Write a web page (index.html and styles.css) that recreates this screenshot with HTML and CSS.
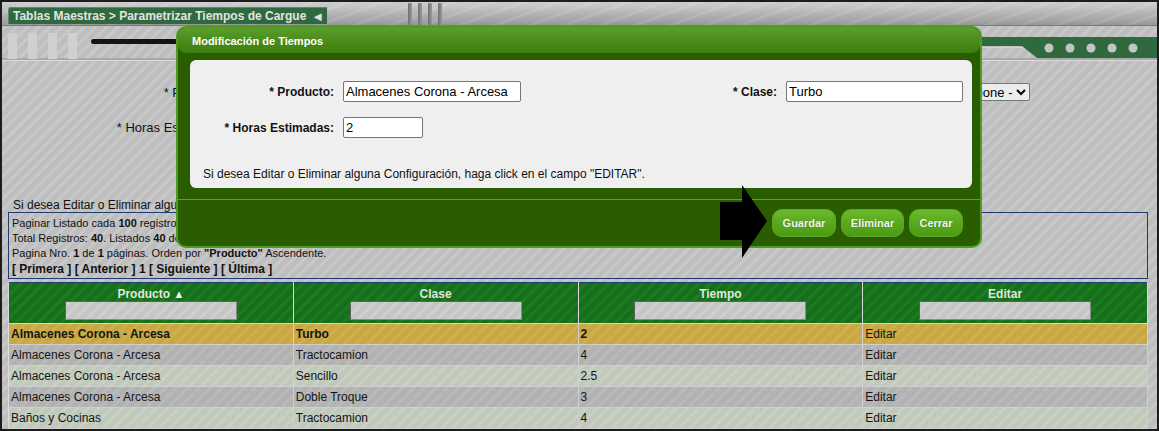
FILE: index.html
```html
<!DOCTYPE html>
<html lang="es">
<head>
<meta charset="utf-8">
<title>Parametrizar Tiempos de Cargue</title>
<link rel="stylesheet" href="styles.css">
</head>
<body>
<div class="page">
  <header class="topbar">
    <div class="crumb">
      <span class="crumb-text">Tablas Maestras &gt; Parametrizar Tiempos de Cargue</span>
      <span class="crumb-arrow">&#9668;</span>
    </div>
    <div class="grip"><i></i><i></i><i></i><i></i></div>
  </header>

  <div class="band">
    <div class="bars"><i></i><i></i><i></i><i></i></div>
    <div class="rule"></div>
    <svg class="deco" width="197" height="34" viewBox="0 0 197 34">
      <rect x="0" y="11" width="197" height="9" fill="#2f6a3e"/>
      <line x1="0" y1="21.5" x2="63" y2="21.5" stroke="#d2d2d2" stroke-width="1"/>
      <polygon points="62,20 77,32 197,32 197,20" fill="#2f6a3e"/>
      <circle cx="89" cy="22" r="4.5" fill="#c4c4c4"/>
      <circle cx="110" cy="22" r="4.5" fill="#c4c4c4"/>
      <circle cx="131" cy="22" r="4.5" fill="#c4c4c4"/>
      <circle cx="152" cy="22" r="4.5" fill="#c4c4c4"/>
      <circle cx="173" cy="22" r="4.5" fill="#c4c4c4"/>
    </svg>
  </div>

  <main class="content">
    <div class="filters">
      <div class="frow">
        <span class="flabel">* Producto:</span>
        <select class="fsel fsel-wide"><option>- Seleccione -</option></select>
        <span class="flabel-right">* Clase:</span>
        <select class="fsel"><option>- Seleccione -</option></select>
      </div>
      <div class="frow frow-2">
        <span class="flabel">* Horas Estimadas:</span>
        <input class="finput" type="text" value="">
      </div>
    </div>

    <p class="hint">Si desea Editar o Eliminar alguna Configuración, haga click en el campo "EDITAR".</p>

    <div class="info">
      <div class="info-line">Paginar Listado cada <b>100</b> registros</div>
      <div class="info-line">Total Registros: <b>40</b>. Listados <b>40</b> de <b>40</b>.</div>
      <div class="info-line">Pagina Nro. <b>1</b> de <b>1</b> páginas. Orden por <b>"Producto"</b> Ascendente.</div>
      <div class="pager">[ Primera ] [ Anterior ] 1 [ Siguiente ] [ Última ]</div>
    </div>

    <table class="grid">
      <thead>
        <tr>
          <th><div class="th-title">Producto <span class="sort">&#9650;</span></div><input class="th-filter" type="text"></th>
          <th><div class="th-title">Clase</div><input class="th-filter" type="text"></th>
          <th><div class="th-title">Tiempo</div><input class="th-filter" type="text"></th>
          <th><div class="th-title">Editar</div><input class="th-filter" type="text"></th>
        </tr>
      </thead>
      <tbody>
        <tr class="sel"><td>Almacenes Corona - Arcesa</td><td>Turbo</td><td>2</td><td class="link">Editar</td></tr>
        <tr class="odd"><td>Almacenes Corona - Arcesa</td><td>Tractocamion</td><td>4</td><td class="link">Editar</td></tr>
        <tr class="even"><td>Almacenes Corona - Arcesa</td><td>Sencillo</td><td>2.5</td><td class="link">Editar</td></tr>
        <tr class="odd"><td>Almacenes Corona - Arcesa</td><td>Doble Troque</td><td>3</td><td class="link">Editar</td></tr>
        <tr class="even"><td>Baños y Cocinas</td><td>Tractocamion</td><td>4</td><td class="link">Editar</td></tr>
      </tbody>
    </table>
  </main>

  <div class="modal">
    <div class="modal-head">Modificación de Tiempos</div>
    <div class="panel">
      <div class="mrow">
        <span class="mlabel">* Producto:</span>
        <input class="minput minput-prod" type="text" value="Almacenes Corona - Arcesa">
        <span class="mlabel-right">* Clase:</span>
        <input class="minput minput-clase" type="text" value="Turbo">
      </div>
      <div class="mrow mrow-2">
        <span class="mlabel">* Horas Estimadas:</span>
        <input class="minput minput-horas" type="text" value="2">
      </div>
      <p class="mhint">Si desea Editar o Eliminar alguna Configuración, haga click en el campo "EDITAR".</p>
    </div>
    <div class="mdivider"></div>
    <div class="mfoot">
      <button class="btn btn-guardar">Guardar</button>
      <button class="btn btn-eliminar">Eliminar</button>
      <button class="btn btn-cerrar">Cerrar</button>
    </div>
  </div>

  <svg class="pointer" width="54" height="80" viewBox="0 0 54 80">
    <polygon points="2,19 24,19 24,2 49,38 24,75 24,57 2,57" fill="#000"/>
  </svg>
</div>
</body>
</html>
```

FILE: styles.css
```css
* { box-sizing: border-box; }

html, body {
  margin: 0;
  padding: 0;
}

body {
  font-family: "Liberation Sans", Arial, sans-serif;
  font-size: 12px;
  color: #111;
  background: #c0c0c0;
}

.page {
  position: relative;
  width: 1159px;
  height: 431px;
  border: 2px solid #1c1c1c;
  overflow: hidden;
  display: flex;
  flex-direction: column;
  background: repeating-linear-gradient(135deg, #bebebe 0 5px, #c8c8c8 5px 8px);
  background-attachment: fixed;
}

/* ---------- top bar ---------- */
.topbar {
  height: 24px;
  flex: none;
  display: flex;
  align-items: flex-start;
  border-bottom: 1px solid #7b7b7b;
  background:
    repeating-linear-gradient(160deg, rgba(255,255,255,0) 0 9px, rgba(255,255,255,.10) 9px 12px),
    linear-gradient(#cdcdcd 0%, #c3c3c3 25%, #b1b1b1 55%, #a2a2a2 85%, #949494 100%);
}

.crumb {
  margin: 5px 0 0 6px;
  width: 319px;
  height: 17px;
  display: flex;
  align-items: center;
  justify-content: space-between;
  padding: 0 3px 0 4px;
  background: #2e6a3e;
  border-top: 1px solid #5e8a69;
  border-left: 1px solid #5e8a69;
  border-radius: 3px 0 0 0;
  color: #e4e4e4;
  font-weight: bold;
  font-size: 12px;
}

.crumb-arrow {
  font-size: 13px;
  line-height: 13px;
  color: #e0e0e0;
}

.grip {
  margin-left: 81px;
  height: 22px;
  margin-top: 1px;
  display: flex;
  gap: 6px;
}

.grip i {
  display: block;
  width: 4px;
  height: 100%;
  background: linear-gradient(90deg, #6e6e6e, #9a9a9a);
  border-radius: 1px;
}

/* ---------- band ---------- */
.band {
  height: 35px;
  flex: none;
  display: flex;
  align-items: flex-start;
  border-bottom: 1px solid #dadada;
  box-shadow: inset 0 -2px 0 #a9a9a9;
}

.bars {
  display: flex;
  gap: 11px;
  margin: 7px 0 0 6px;
  height: 26px;
}

.bars i {
  display: block;
  width: 9px;
  height: 100%;
  background: #d0d0d0;
}

.rule {
  margin: 13px 0 0 14px;
  width: 560px;
  height: 5px;
  border-radius: 3px;
  background: #141414;
}

.deco {
  margin-left: auto;
  display: block;
}

/* ---------- content ---------- */
.content {
  flex: 1;
  display: flex;
  flex-direction: column;
}

.filters {
  padding-top: 22px;
}

.frow {
  display: flex;
  align-items: center;
  height: 18px;
  padding-right: 127px;
}

.frow-2 {
  margin-top: 17px;
}

.flabel {
  width: 226px;
  text-align: right;
  font-size: 13px;
  margin-right: 12px;
}

.flabel-right {
  margin-left: auto;
  font-size: 13px;
  margin-right: 8px;
}

.fsel {
  height: 18px;
  font-family: "Liberation Sans", Arial, sans-serif;
  font-size: 13px;
  border: 1px solid #767676;
  border-radius: 2px;
  background: #ececec;
  padding: 0;
}

.fsel-wide {
  width: 260px;
}

.finput {
  width: 80px;
  height: 18px;
  border: 1px solid #767676;
  border-radius: 2px;
}

.hint {
  margin: 62px 0 0 11px;
  font-size: 12px;
  line-height: 14px;
}

.info {
  margin: 0 9px 0 6px;
  border: 1px solid #1f3b72;
  padding: 3px 3px 1px;
}

.info-line {
  font-size: 11px;
  line-height: 15px;
}

.pager {
  font-size: 12px;
  font-weight: bold;
  line-height: 16px;
}

/* ---------- table ---------- */
.grid {
  margin: 3px 9px 0 6px;
  width: 1140px;
  border-collapse: collapse;
  border: 1px solid #1f3b72;
  table-layout: fixed;
}

.grid th {
  padding: 4px 0 3px;
  border: 1px solid #d6d6d6;
  border-top: none;
  text-align: center;
  vertical-align: top;
  background: repeating-linear-gradient(135deg, #16701b 0 5px, #1d7a21 5px 8px);
  background-attachment: fixed;
}

.th-title {
  color: #dfe6df;
  font-weight: bold;
  font-size: 12px;
  line-height: 14px;
}

.sort {
  font-size: 11px;
  color: #f0f0f0;
}

.th-filter {
  display: block;
  margin: 0 auto;
  width: 172px;
  height: 19px;
  border: 1px solid #5e5e5e;
  border-right-color: #8a8a8a;
  border-bottom-color: #8a8a8a;
  background: repeating-linear-gradient(135deg, #c6c6c6 0 5px, #cfcfcf 5px 8px);
  background-attachment: fixed;
}

.grid td {
  height: 21px;
  padding: 0 2px;
  font-size: 12px;
  line-height: 14px;
  color: #151515;
  border: 1px solid #d0d0d0;
  border-left-color: #dcdcdc;
  white-space: nowrap;
}

.grid tr.sel td {
  font-weight: bold;
  background: repeating-linear-gradient(135deg, #c8a744 0 5px, #cfae4c 5px 8px);
  background-attachment: fixed;
}

.grid tr.sel td.link {
  font-weight: normal;
}

.grid tr.odd td {
  background: repeating-linear-gradient(135deg, #b2b2b2 0 5px, #b9b9b9 5px 8px);
  background-attachment: fixed;
}

.grid tr.even td {
  background: repeating-linear-gradient(135deg, #c1c9bb 0 5px, #c8cfc3 5px 8px);
  background-attachment: fixed;
}

/* ---------- modal ---------- */
.modal {
  position: absolute;
  left: 174px;
  top: 24px;
  width: 806px;
  height: 222px;
  border: 2px solid #4e9b22;
  border-radius: 10px;
  background: #2a5d00;
  display: flex;
  flex-direction: column;
}

.modal-head {
  height: 25px;
  flex: none;
  padding: 6px 0 0 14px;
  border-radius: 8px;
  background: linear-gradient(#5c9e2e, #4b8e1d 45%, #3c7f0d);
  color: #fff;
  font-weight: bold;
  font-size: 11px;
  line-height: 14px;
}

.panel {
  margin: 7px 8px 0 12px;
  height: 128px;
  flex: none;
  background: #efefef;
  border-radius: 6px;
  padding: 21px 9px 0 0;
}

.mrow {
  display: flex;
  align-items: center;
  height: 21px;
}

.mrow-2 {
  margin-top: 15px;
}

.mlabel {
  width: 144px;
  text-align: right;
  font-weight: bold;
  font-size: 12px;
  margin-right: 9px;
}

.mlabel-right {
  margin-left: auto;
  font-weight: bold;
  font-size: 12px;
  margin-right: 9px;
}

.minput {
  height: 21px;
  border: 1px solid #767676;
  border-radius: 2px;
  background: #fff;
  font-family: "Liberation Sans", Arial, sans-serif;
  font-size: 13px;
  color: #000;
  padding: 0 2px;
}

.minput-prod { width: 178px; }
.minput-clase { width: 177px; }
.minput-horas { width: 80px; }

.mhint {
  margin: 29px 0 0 13px;
  font-size: 12px;
  line-height: 14px;
}

.mdivider {
  margin-top: 11px;
  height: 1px;
  flex: none;
  background: #5fa033;
}

.mfoot {
  display: flex;
  justify-content: flex-end;
  gap: 5px;
  padding: 9px 17px 0 0;
}

.btn {
  height: 28px;
  border: 1px solid #5da62a;
  border-radius: 10px;
  background: linear-gradient(#6cb92e, #58a91c 50%, #4a9c12);
  color: #f4f4f4;
  font-family: "Liberation Sans", Arial, sans-serif;
  font-weight: bold;
  font-size: 11px;
  padding: 0;
  text-shadow: 0 0 1px rgba(0,0,0,.35);
}

.btn-guardar { width: 64px; }
.btn-eliminar { width: 63px; }
.btn-cerrar { width: 54px; }

.pointer {
  position: absolute;
  left: 716px;
  top: 181px;
}
```
